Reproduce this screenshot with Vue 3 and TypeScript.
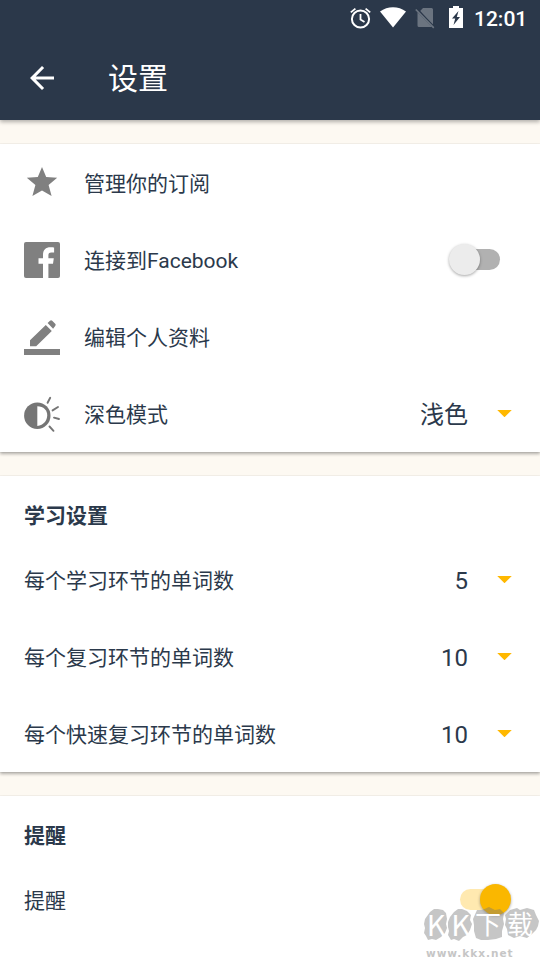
<script setup lang="ts">
import { ref } from 'vue'

interface Item {
  label: string
  icon?: 'star' | 'facebook' | 'edit' | 'theme'
  value?: string
  toggle?: boolean
}
interface Section {
  title?: string
  items: Item[]
}

const sections = ref<Section[]>([
  {
    items: [
      { label: '管理你的订阅', icon: 'star' },
      { label: '连接到Facebook', icon: 'facebook', toggle: false },
      { label: '编辑个人资料', icon: 'edit' },
      { label: '深色模式', icon: 'theme', value: '浅色' },
    ],
  },
  {
    title: '学习设置',
    items: [
      { label: '每个学习环节的单词数', value: '5' },
      { label: '每个复习环节的单词数', value: '10' },
      { label: '每个快速复习环节的单词数', value: '10' },
    ],
  },
  { title: '提醒', items: [{ label: '提醒', toggle: true }] },
])
</script>

<template>
  <div class="screen">
    <header class="header">
      <div class="status">
        <svg class="alarm" width="22" height="22" viewBox="0 0 22 22" fill="none" stroke="#fff" stroke-width="2">
          <circle cx="10.500" cy="12" r="8.600" />
          <path d="M10.500 7v5.400l4 2.500M.8 5.400 5.400 1.600M20.200 5.400l-4.600-3.800" stroke-width="1.800" />
        </svg>
        <svg class="wifi" width="26" height="21" viewBox="0 0 26 21">
          <path fill="#fff" d="M0 4.500C7.500-1.200 18.500-1.200 26 4.500L13 20.500z" />
        </svg>
        <svg class="sim" width="20" height="22" viewBox="0 0 20 22">
          <path fill="#6b7480" d="M8 1h8.500q1.500 0 1.500 1.500v15.800L5.200 4zM2.500 5.200 17 20H4q-1.500 0-1.500-1.500z" />
          <path d="M1.600 1.700 19.600 20" stroke="#2b384a" stroke-width="1.400" />
          <path d="M.8 2.500 18.800 20.800" stroke="#6b7480" stroke-width="1.700" />
        </svg>
        <svg class="battery" width="14" height="22" viewBox="0 0 14 22">
          <path fill="#fff" d="M4 0h6v2h4v20H0V2h4z" />
          <path fill="#2b384a" d="M9.500 5 3 12.500h3.200L4.500 19l6.500-8H7.800z" />
        </svg>
        <span class="clock">12:01</span>
      </div>
      <div class="toolbar">
        <svg class="back" width="36" height="36" viewBox="0 0 24 24">
          <path fill="#fff" d="M20 11H7.830l5.590-5.590L12 4l-8 8 8 8 1.410-1.410L7.830 13H20z" />
        </svg>
        <h1>设置</h1>
      </div>
    </header>

    <main class="content">
      <section v-for="(section, s) in sections" :key="s" class="card">
        <h2 v-if="section.title">{{ section.title }}</h2>
        <div v-for="item in section.items" :key="item.label" class="row">
          <span v-if="item.icon" class="icon">
            <svg v-if="item.icon === 'star'" width="36" height="36" viewBox="0 0 36 36">
              <path fill="#808080" d="m18 2 4.200 10 11 .7-8.600 7.200 3 11.200L18 25.500l-9.600 5.600 3-11.200-8.600-7.200 11-.7z" />
            </svg>
            <svg v-else-if="item.icon === 'facebook'" width="36" height="36" viewBox="0 0 36 36">
              <rect width="36" height="36" rx="2" fill="#808080" />
              <path fill="#fff" d="M19 36V21.700h-4.500v-5.400H19V13c0-5.200 2.800-7.700 7.400-7.700 1.900 0 3 .1 3.700.3v4.900h-2.700c-2.500 0-3 1.300-3 3v2.800h5.400l-.8 5.400h-4.600V36z" />
            </svg>
            <svg v-else-if="item.icon === 'edit'" width="36" height="36" viewBox="0 0 36 36">
              <path fill="#808080" d="m21.800 5.900 6 6L12.200 27.200H6v-6zM23.600 4.100l2.400-2.300q1.100-1 2.200 0l3 3q1.100 1.100 0 2.200l-2.100 2.700z" />
              <path fill="#808080" d="M0 30h36v6H0z" />
            </svg>
            <svg v-else width="36" height="36" viewBox="0 0 36 36">
              <circle cx="13.300" cy="19.700" r="13.200" fill="#757575" />
              <path fill="#fff" d="M13.300 10.300c6.500.3 9.900 3.700 9.900 9s-3.400 9.900-9.900 10.600z" />
              <path d="m23.600 6.800 2.600-5M28.600 14.400l5.400-3.400M30 21.600l5 1.400M25.500 30.500l4 4.300" stroke="#757575" stroke-width="1.900" stroke-linecap="round" />
            </svg>
          </span>
          <span class="label">{{ item.label }}</span>
          <template v-if="item.value">
            <span class="value">{{ item.value }}</span>
            <span class="caret"></span>
          </template>
          <button
            v-if="item.toggle !== undefined"
            class="switch"
            :class="{ on: item.toggle }"
            role="switch"
            :aria-checked="item.toggle"
            @click="item.toggle = !item.toggle"
          >
            <span class="thumb"></span>
          </button>
        </div>
      </section>
    </main>

    <div class="watermark">
      <svg width="120" height="40" viewBox="0 0 120 40">
        <g fill="#777" fill-opacity=".42">
          <path d="m10 8 4-3 4 0 5 1 3 3 1 6-1 5 1 4-2 5-4 4-5 3-4-1-4 1-2-4-2-3 1-5-1-4 1-5z" />
          <path d="m34 8 4-3 4 0 5 2 4 4-1 5 2 4-2 6-3 5-4 2-4 4-5-2-3 1-3-5 1-4-1-4 0-5 2-5z" />
          <path d="m57 6 5 0 7-3 6 3 5-1 4 4-1 6 1 5-2 7 0 6-6 2-8 1-7 0-5-2-2-7 0-6-1-6z" />
          <path d="m90 6 7-2 3 2 7-2 7 2 2 5 3 6-1 5-2 4-4 4-5 4-7-2-6 2-6-3-1-6-2-4 1-6-1-4z" />
        </g>
      </svg>
      <div class="brand"><span class="latin">K</span><span class="latin">K</span><span>下</span><span>载</span></div>
      <div class="site">www.kkx.net</div>
    </div>
  </div>
</template>

<style>
body {
  margin: 0;
  overflow: hidden;
}
</style>

<style scoped>
.screen {
  position: relative;
  width: 540px;
  height: 960px;
  overflow: hidden;
  background: #fdf9f2;
  color: #2b394b;
  font-family: Roboto, "Noto Sans CJK SC", sans-serif;
}
.header {
  position: relative;
  height: 120px;
  background: #2b384a;
  color: #fff;
  box-shadow: 0 2px 4px rgba(0, 0, 0, 0.3);
}
.status {
  display: flex;
  height: 36px;
  box-sizing: border-box;
  padding: 7px 12px 0 350px;
  align-items: flex-start;
}
.status svg {
  flex: none;
}
.wifi {
  margin-left: 8px;
}
.sim {
  margin-left: 9px;
}
.battery {
  margin: -1px 0 0 14px;
}
.clock {
  margin-left: 11px;
  font-size: 21px;
  line-height: 24px;
  font-weight: 500;
}
.toolbar {
  display: flex;
  align-items: center;
  height: 84px;
  padding-left: 24px;
}
h1 {
  margin: 1px 0 0 48px;
  font-size: 30px;
  line-height: 40px;
  font-weight: 400;
}
.content {
  display: flex;
  flex-direction: column;
  gap: 24px;
  padding-top: 24px;
}
.card {
  background: #fff;
  box-shadow: 0 2px 3px rgba(0, 0, 0, 0.3), 0 0 1px rgba(0, 0, 0, 0.2);
}
.card:last-child {
  padding-bottom: 30px;
}
h2 {
  margin: 0;
  height: 65px;
  box-sizing: border-box;
  padding: 25px 24px 0;
  font-size: 21px;
  line-height: 30px;
  font-weight: 700;
}
.row {
  display: flex;
  align-items: center;
  height: 77px;
  padding: 0 28px 0 24px;
}
.icon {
  width: 36px;
  height: 36px;
  margin-right: 24px;
}
.icon svg {
  display: block;
  overflow: visible;
}
.label {
  flex: 1;
  padding-top: 2px;
  font-size: 21px;
  line-height: 30px;
}
.value {
  padding-top: 2px;
  font-size: 24px;
  line-height: 32px;
}
.caret {
  width: 15px;
  height: 7.5px;
  margin-left: 29px;
  background: #ffb800;
  clip-path: polygon(0 0, 100% 0, 50% 100%);
}
.switch {
  display: flex;
  align-items: center;
  width: 40px;
  height: 21px;
  margin-right: 12px;
  padding: 0;
  border: 0;
  border-radius: 11px;
  background: #b1b1b1;
}
.thumb {
  flex: none;
  width: 31px;
  height: 31px;
  margin-left: -11px;
  border-radius: 50%;
  background: #ececec;
  box-shadow: 0 1px 3px rgba(0, 0, 0, 0.35);
}
.switch.on {
  background: #ffe9b0;
}
.switch.on .thumb {
  margin-left: 20px;
  background: #fab700;
}
.watermark {
  position: absolute;
  left: 420px;
  top: 904px;
  width: 120px;
  height: 56px;
}
.watermark svg {
  display: block;
}
.brand {
  position: absolute;
  left: 4px;
  top: 2px;
  display: grid;
  grid-template-columns: 24px 25px 30px 34px;
  color: #fff;
  font-family: "Noto Sans CJK SC", sans-serif;
  font-size: 26px;
  line-height: 34px;
  text-align: center;
}
.latin {
  font-size: 29px;
}
.site {
  position: absolute;
  left: 6px;
  top: 42px;
  color: #c6c6c6;
  font-family: "DejaVu Sans", sans-serif;
  font-size: 10.5px;
  line-height: 14px;
  font-weight: 700;
  letter-spacing: 0.98px;
}
</style>
